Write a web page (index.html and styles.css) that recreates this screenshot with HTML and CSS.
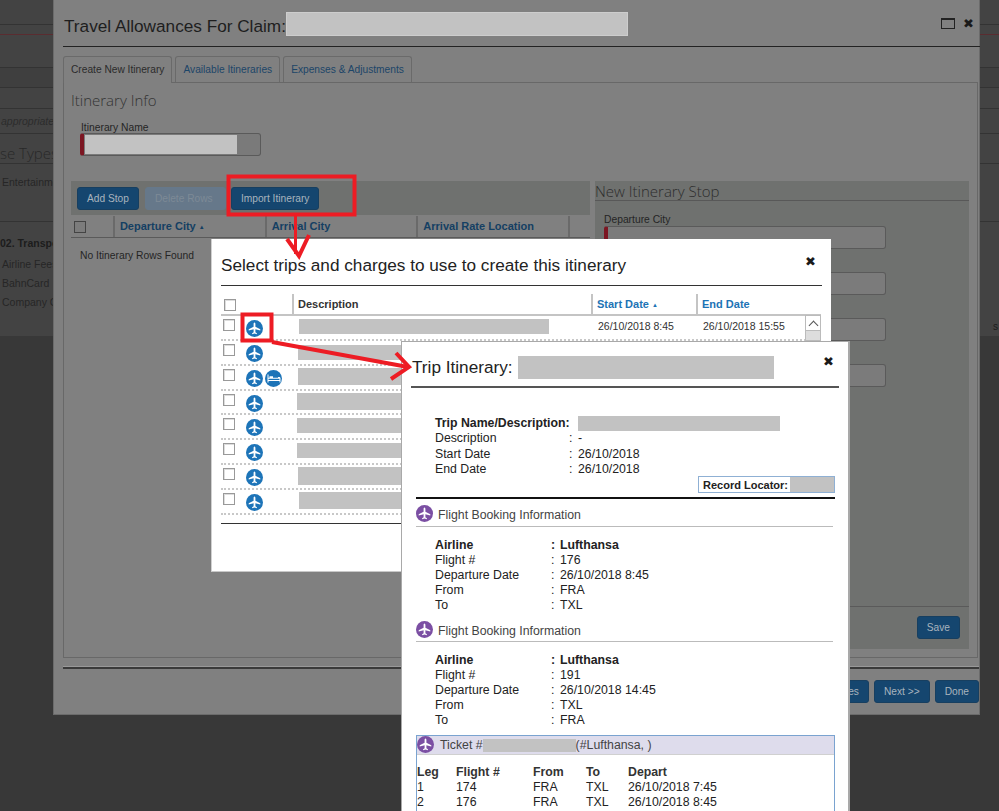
FILE: index.html
```html
<!DOCTYPE html>
<html lang="en">
<head>
<meta charset="utf-8">
<title>Travel Allowances For Claim</title>
<link rel="stylesheet" href="styles.css">
</head>
<body>
<svg class="defs" width="0" height="0" aria-hidden="true">
  <symbol id="plane" viewBox="0 0 17 17">
    <path fill="#fff" d="M8.5 2.6c.6 0 .9.8.9 1.500v2.700l4.900 2.500v1.300L9.400 9.300v2.900l1.500 1.100v.9l-2.400-.6-2.400.6v-.9l1.500-1.100V9.300L2.700 10.600V9.300l4.900-2.500V4.100c0-.7.300-1.500.9-1.500z"/>
  </symbol>
  <symbol id="bed" viewBox="0 0 17 17">
    <path fill="#fff" d="M2.500 4.500h1v3.300h1V6.300h3.500v1.500h5V7h1.200c.7 0 1.300.600 1.300 1.300v4.200h-1v-1.400h-11v1.400h-1zM3.500 8.800v1.300h10.900V8.800z"/>
  </symbol>
</svg>

<div class="page">
  <div class="under">
    <div class="u-row u-h25"></div>
    <div class="u-row u-h9 u-red"></div>
    <div class="u-row u-h33"></div>
    <div class="u-row u-h20 u-alt"></div>
    <div class="u-row u-h22"></div>
    <div class="u-row u-h25"><span class="u-note">appropriate</span></div>
    <div class="u-row u-h30"><span class="u-head">se Types</span></div>
    <div class="u-row u-h58"><span class="u-item u-ent">Entertainment</span></div>
    <div class="u-row u-last">
      <div class="u-list">
        <b class="u-bold">02. Transport</b>
        <span class="u-item">Airline Fees</span>
        <span class="u-item">BahnCard</span>
        <span class="u-item">Company Car</span>
      </div>
      <span class="u-s">s</span>
    </div>
  </div>

  <section class="dialog">
    <header class="d-head">
      <h1 class="d-title">Travel Allowances For Claim:</h1>
      <span class="redact r-claim"></span>
      <span class="d-max"></span>
      <span class="x d-x">&#10006;</span>
    </header>
    <nav class="tabs">
      <span class="tab tab-on">Create New Itinerary</span>
      <span class="tab">Available Itineraries</span>
      <span class="tab">Expenses &amp; Adjustments</span>
    </nav>
    <div class="tabpanel">
      <h2 class="lite">Itinerary Info</h2>
      <label class="lbl lbl-name">Itinerary Name</label>
      <div class="field f-name"><span class="redact r-name"></span></div>
      <div class="cols">
        <div class="left">
          <div class="toolbar">
            <span class="btn">Add Stop</span>
            <span class="btn btn-off">Delete Rows</span>
            <span class="btn btn-import">Import Itinerary</span>
          </div>
          <div class="thead">
            <span class="th th-check"><i class="check check-dim"></i></span>
            <span class="th th-c">Departure City <em class="sort">&#9650;</em></span>
            <span class="th th-c">Arrival City</span>
            <span class="th th-c">Arrival Rate Location</span>
            <span class="th th-end"></span>
          </div>
          <p class="norows">No Itinerary Rows Found</p>
        </div>
        <div class="right">
          <h2 class="lite stop-head">New Itinerary Stop</h2>
          <div class="stop-body">
            <label class="lbl">Departure City</label>
            <div class="field f-stop"></div>
            <div class="field f-stop f-gap"></div>
            <div class="field f-stop f-gap"></div>
            <div class="field f-stop f-gap"></div>
          </div>
          <div class="stop-foot"><span class="btn">Save</span></div>
        </div>
      </div>
    </div>
    <footer class="d-foot">
      <span class="btn">Expenses</span>
      <span class="btn">Next &gt;&gt;</span>
      <span class="btn">Done</span>
    </footer>
  </section>

  <section class="picker">
    <header class="p-head">
      <h2 class="p-title">Select trips and charges to use to create this itinerary</h2>
      <span class="x p-x">&#10006;</span>
    </header>
    <div class="p-thead">
      <span class="pth pth-check"><i class="check"></i></span>
      <span class="pth pth-desc">Description</span>
      <span class="pth pth-date">Start Date <em class="sort">&#9650;</em></span>
      <span class="pth pth-date">End Date</span>
    </div>
    <div class="p-row">
      <i class="check"></i>
      <span class="icons"><svg class="ico ico-blue"><use href="#plane"/></svg></span>
      <span class="redact r-row r1"></span>
      <span class="p-date p-d1">26/10/2018 8:45</span>
      <span class="p-date p-d2">26/10/2018 15:55</span>
      <span class="scroll"><span class="scroll-up"></span><span class="scroll-thumb"></span></span>
    </div>
    <div class="p-row"><i class="check"></i><span class="icons"><svg class="ico ico-blue"><use href="#plane"/></svg></span><span class="redact r-row r2"></span></div>
    <div class="p-row"><i class="check"></i><span class="icons"><svg class="ico ico-blue"><use href="#plane"/></svg><svg class="ico ico-blue ico-bed"><use href="#bed"/></svg></span><span class="redact r-row r3"></span></div>
    <div class="p-row"><i class="check"></i><span class="icons"><svg class="ico ico-blue"><use href="#plane"/></svg></span><span class="redact r-row r4"></span></div>
    <div class="p-row"><i class="check"></i><span class="icons"><svg class="ico ico-blue"><use href="#plane"/></svg></span><span class="redact r-row r5"></span></div>
    <div class="p-row"><i class="check"></i><span class="icons"><svg class="ico ico-blue"><use href="#plane"/></svg></span><span class="redact r-row r6"></span></div>
    <div class="p-row"><i class="check"></i><span class="icons"><svg class="ico ico-blue"><use href="#plane"/></svg></span><span class="redact r-row r7"></span></div>
    <div class="p-row"><i class="check"></i><span class="icons"><svg class="ico ico-blue"><use href="#plane"/></svg></span><span class="redact r-row r8"></span></div>
    <div class="p-end"></div>
  </section>

  <section class="trip">
    <header class="t-head">
      <h2 class="t-title">Trip Itinerary:</h2>
      <span class="redact r-trip"></span>
      <span class="x t-x">&#10006;</span>
    </header>
    <dl class="kv kv-trip">
      <dt class="b">Trip Name/Description:</dt><dd><span class="redact r-tn"></span></dd>
      <dt>Description</dt><dd><i class="colon">:</i>-</dd>
      <dt>Start Date</dt><dd><i class="colon">:</i>26/10/2018</dd>
      <dt>End Date</dt><dd><i class="colon">:</i>26/10/2018</dd>
    </dl>
    <div class="locator-row"><div class="locator"><b>Record Locator:</b><span class="redact r-loc"></span></div></div>
    <div class="thick"></div>

    <div class="sec sec-1"><svg class="ico ico-purple"><use href="#plane"/></svg><span class="sec-text">Flight Booking Information</span></div>
    <dl class="kv kv-flight">
      <dt class="b">Airline</dt><dd class="b"><i class="colon">:</i>Lufthansa</dd>
      <dt>Flight #</dt><dd><i class="colon">:</i>176</dd>
      <dt>Departure Date</dt><dd><i class="colon">:</i>26/10/2018 8:45</dd>
      <dt>From</dt><dd><i class="colon">:</i>FRA</dd>
      <dt>To</dt><dd><i class="colon">:</i>TXL</dd>
    </dl>
    <div class="sec sec-2"><svg class="ico ico-purple"><use href="#plane"/></svg><span class="sec-text">Flight Booking Information</span></div>
    <dl class="kv kv-flight">
      <dt class="b">Airline</dt><dd class="b"><i class="colon">:</i>Lufthansa</dd>
      <dt>Flight #</dt><dd><i class="colon">:</i>191</dd>
      <dt>Departure Date</dt><dd><i class="colon">:</i>26/10/2018 14:45</dd>
      <dt>From</dt><dd><i class="colon">:</i>TXL</dd>
      <dt>To</dt><dd><i class="colon">:</i>FRA</dd>
    </dl>
    <div class="ticket">
      <div class="ticket-head"><svg class="ico ico-purple"><use href="#plane"/></svg><span>Ticket #</span><span class="redact r-tk"></span><span>(#Lufthansa, )</span></div>
      <div class="legs">
        <b>Leg</b><b>Flight #</b><b>From</b><b>To</b><b>Depart</b>
        <span>1</span><span>174</span><span>FRA</span><span>TXL</span><span>26/10/2018 7:45</span>
        <span>2</span><span>176</span><span>FRA</span><span>TXL</span><span>26/10/2018 8:45</span>
      </div>
    </div>
  </section>

  <svg class="marks" viewBox="0 0 999 811" aria-hidden="true">
    <g fill="none" stroke="#ed1c24" stroke-linejoin="miter">
      <rect x="228.500" y="176.500" width="126" height="38" stroke-width="4"/>
      <rect x="242.500" y="314.500" width="29" height="26" stroke-width="4"/>
      <path d="M295.500 216V254" stroke-width="3"/>
      <path d="M287 239l12 17 10-21" stroke-width="4"/>
      <path d="M272 342l136 25" stroke-width="4"/>
      <path d="M396 353l13 14-18 12" stroke-width="4"/>
    </g>
  </svg>
</div>
</body>
</html>
```
FILE: styles.css
```css
* { box-sizing: border-box; }
html, body { margin: 0; padding: 0; }
body { background: #383838; font-family: "Liberation Sans", Arial, sans-serif; overflow: hidden; }
.defs { position: absolute; }
.page { position: relative; width: 999px; height: 811px; overflow: hidden; background: #383838; }

/* dimmed page behind the dialog */
.under { color: #222; font-size: 12px; }
.u-row { background: #434343; border-bottom: 1px solid #333; overflow: hidden; }
.u-h25 { height: 25px; } .u-h9 { height: 10px; } .u-h33 { height: 33px; } .u-h20 { height: 20px; }
.u-h22 { height: 21px; } .u-h30 { height: 30px; } .u-h58 { height: 58px; }
.u-red { border-bottom: 1px solid #5a2c30; }
.u-alt { background: #3f3f3f; }
.u-note { display: block; font: italic 10.500px/25px "Liberation Sans", sans-serif; padding-left: 1px; color: #2c2c2c; }
.u-head { display: block; font: 300 15px/36px "Open Sans", sans-serif; color: #282828; white-space: nowrap; margin-top: 1px; }
.u-item { display: block; font-size: 10.500px; line-height: 19px; padding-left: 2px; color: #262626; white-space: nowrap; }
.u-ent { padding-top: 9px; }
.u-last { height: 114px; border-bottom: 0; display: flex; justify-content: space-between; align-items: flex-end; }
.u-list { padding-top: 14px; height: 114px; }
.u-bold { display: block; font-size: 10.500px; line-height: 14px; margin-bottom: 5px; color: #1c1c1c; white-space: nowrap; }
.u-s { font-size: 10px; padding: 0 1px 4px 0; color: #1c1c1c; }

/* main dialog */
.dialog { position: absolute; left: 53px; top: 0; width: 927px; height: 715px; background: #808080; border: 1px solid #6b6b6b; border-top: 0; padding: 0 0 0 9px; }
.d-head { display: flex; align-items: center; width: 917px; height: 47px; border-bottom: 1px solid #222; padding: 5px 6px 0 1px; }
.d-title { margin: 0; font: 400 17.200px/22px "Liberation Sans", sans-serif; color: #1e1e1e; white-space: nowrap; }
.r-claim { width: 342px; height: 24px; margin-left: 0; margin-top: -3px; border: 1px solid #cdcdcd; }
.d-max { margin-left: auto; width: 14px; height: 11px; border: 1px solid #222; border-top-width: 2px; margin-top: -5px; }
.d-x { margin-left: 8px; margin-top: -5px; }
.x { font: 700 13px/13px "DejaVu Sans", sans-serif; color: #1a1a1a; }
.redact { display: inline-block; background: #c2c2c2; flex: none; }

.tabs { display: flex; gap: 3px; padding: 9px 0 0 0; height: 35px; }
.tab { height: 26px; border: 1px solid #6a6a6a; border-bottom: 0; border-radius: 3px 3px 0 0; padding: 0 7px; font-size: 10.200px; line-height: 25px; color: #1c4568; white-space: nowrap; }
.tab-on { color: #2b2b2b; background: #808080; height: 27px; margin-bottom: -1px; position: relative; z-index: 1; }
.tabpanel { width: 915px; height: 576px; margin-left: 0; border: 1px solid #686868; padding: 0 7px; }
.lite { margin: 0; font: 300 15px/22px "Open Sans", sans-serif; color: #333; white-space: nowrap; }
.tabpanel > .lite { padding-top: 6px; height: 30px; line-height: 22px; }
.lbl { display: block; font-size: 10.300px; line-height: 13px; color: #252525; }
.lbl-name { margin: 8px 0 0 10px; }
.field { background: #7a7a7a; border: 1px solid #5a5a5a; border-left: 4px solid #7c1622; border-radius: 3px; }
.f-name { margin: -1px 0 0 9px; width: 181px; height: 23px; padding: 1px 0 0 1px; }
.r-name { display: block; width: 152px; height: 19px; }
.cols { display: flex; gap: 5px; margin-top: 25px; }
.left { width: 519px; }
.toolbar { display: flex; gap: 6px; align-items: center; height: 34px; background: #6f716f; padding-left: 6px; }
.btn { display: inline-block; height: 23px; padding: 0 9px; background: #15466f; border: 1px solid #173f60; border-radius: 3px; color: #a8b4be; font-size: 10.200px; line-height: 21px; white-space: nowrap; }
.btn-off { background: #66788a; border-color: #66788a; color: #7d8a96; width: 81px; }
.btn-import { margin-left: -1px; }
.thead { display: flex; height: 22px; border-bottom: 1px solid #5a5a5a; margin-top: 1px; }
.th { border-right: 2px solid #6a6a6a; padding-left: 5px; font-size: 11px; font-weight: 700; color: #143f63; line-height: 21px; white-space: nowrap; width: 152px; }
.th-check { width: 44px; padding-left: 3px; }
.th-end { border-right: 0; width: 20px; }
.sort { font-size: 6px; font-style: normal; vertical-align: 1px; }
.check { display: block; width: 12px; height: 12px; background: #fff; border: 1px solid #999; box-shadow: inset 1px 1px 0 #ddd; flex: none; }
.check-dim { background: #7c7c7c; border-color: #444; box-shadow: none; margin-top: 5px; }
.norows { margin: 11px 0 0 9px; font-size: 10.300px; line-height: 13px; color: #252525; }
.right { width: 374px; height: 468px; background: #6f716f; display: flex; flex-direction: column; }
.stop-head { height: 20px; line-height: 20px; border-bottom: 1px solid #585858; color: #2d2d2d; }
.stop-body { padding: 12px 0 0 9px; height: 406px; border-bottom: 1px solid #5a5a5a; }
.f-stop { width: 282px; height: 23px; background: #7b7b7b; }
.f-gap { margin-top: 23px; border-left-color: #5a5a5a; }
.stop-foot { display: flex; justify-content: flex-end; padding: 9px 9px 0 0; }
.d-foot { display: flex; justify-content: flex-end; gap: 5px; width: 916px; margin-top: 9px; border-top: 2px solid #3a3a3a; box-shadow: 0 -1px 0 #999; padding-top: 11px; }

/* trip picker */
.picker { position: absolute; left: 211px; top: 239px; width: 620px; height: 333px; background: #fff; border-left: 1px solid #d0d0d0; border-bottom: 1px solid #c8c8c8; padding: 0 9px; }
.p-head { display: flex; justify-content: space-between; align-items: center; height: 47px; border-bottom: 1px solid #333; padding-right: 6px; }
.p-title { margin: 6px 0 0; font: 400 17.200px/20px "Liberation Sans", sans-serif; color: #222; white-space: nowrap; }
.p-x { margin-top: -1px; }
.p-thead { display: flex; height: 22px; margin-top: 8px; border-bottom: 2px solid #c4c4c4; font-size: 11px; font-weight: 700; line-height: 21px; width: 600px; }
.pth { border-left: 2px solid #c4c4c4; padding-left: 4px; white-space: nowrap; }
.pth-check { border: 0; width: 71px; padding: 5px 0 0 3px; }
.pth-desc { width: 299px; color: #333; }
.pth-date { width: 105px; color: #1d73b5; }
.p-row { position: relative; display: flex; align-items: flex-start; width: 600px; height: 24.850px; border-bottom: 2px dotted #c8c8c8; padding: 3px 0 0 2px; }
.icons { display: flex; gap: 1px; margin: 1px 0 0 11px; width: 40px; }
.ico { display: block; width: 17px; height: 17px; flex: none; border-radius: 50%; }
.ico-blue { background: #1d74b8; }
.ico-purple { background: #7b4fa3; }
.ico-bed { margin-left: 1px; }
.r-row { height: 15px; }
.r1 { width: 250px; margin: 0 0 0 13px; }
.r2 { width: 120px; margin: 1px 0 0 12px; height: 15px; }
.r3 { width: 120px; margin: -1px 0 0 12px; height: 17px; }
.r4 { width: 120px; margin: -1px 0 0 11px; height: 17px; }
.r5 { width: 120px; margin: 0 0 0 11px; }
.r6 { width: 120px; margin: 0 0 0 11px; }
.r7 { width: 120px; margin: -1px 0 0 12px; height: 18px; }
.r8 { width: 120px; margin: -1px 0 0 13px; height: 17px; }
.p-date { position: absolute; top: 4px; font-size: 10.500px; line-height: 13px; color: #333; white-space: nowrap; }
.p-d1 { left: 377px; } .p-d2 { left: 482px; }
.scroll { position: absolute; left: 584px; top: -1px; width: 16px; display: flex; flex-direction: column; }
.scroll-up { height: 16px; border: 1px solid #bbb; position: relative; }
.scroll-up::after { content: ""; position: absolute; left: 4px; top: 6px; width: 6px; height: 6px; border: solid #555; border-width: 1px 0 0 1px; transform: rotate(45deg); }
.scroll-thumb { height: 10px; background: #ddd; border: 1px solid #bbb; border-top: 0; }
.p-end { width: 600px; margin-top: 8px; border-top: 1px solid #333; }

/* trip itinerary */
.trip { position: absolute; left: 401px; top: 341px; width: 449px; height: 480px; background: #fff; border: 1px solid #a9a9a9; border-right-width: 2px; padding: 0 9px; font-size: 12.300px; color: #222; }
.t-head { display: flex; align-items: center; height: 46px; border-bottom: 2px solid #555; width: 428px; padding-right: 5px; }
.t-title { margin: 6px 0 0 1px; font: 400 17.200px/22px "Liberation Sans", sans-serif; color: #222; white-space: nowrap; }
.r-trip { width: 256px; height: 23px; margin: 7px 0 0 5px; }
.t-x { margin-left: auto; margin-top: -5px; }
.kv { display: grid; margin: 0; line-height: 15.300px; }
.kv dt, .kv dd { margin: 0; white-space: nowrap; }
.b { font-weight: 700; }
.colon { font-style: normal; position: absolute; margin-left: -9px; }
.kv-trip { grid-template-columns: 143px 1fr; margin: 28px 0 0 24px; }
.r-tn { display: block; width: 202px; height: 15px; }
.kv-flight { grid-template-columns: 125px 1fr; margin: 11px 0 0 24px; line-height: 15px; }
.locator-row { display: flex; justify-content: flex-end; width: 424px; }
.locator { display: flex; align-items: center; width: 137px; height: 17px; margin-top: -1px; border: 1px solid #8fb0d4; padding-left: 4px; font-size: 11px; }
.r-loc { width: 44px; height: 15px; margin-left: auto; }
.thick { width: 419px; margin: 4px 0 0 5px; border-top: 2px solid #111; }
.sec { display: flex; align-items: center; gap: 5px; width: 417px; margin-left: 5px; height: 27px; padding-top: 1px; border-bottom: 1px solid #bbb; color: #444; }
.sec-text { margin-top: 3px; }
.sec-1 { margin-top: 1px; }
.sec-2 { margin-top: 1px; height: 28px; padding-top: 3px; }
.ticket { width: 419px; height: 90px; margin: 7px 0 0 5px; border: 1px solid #7aa3d0; }
.ticket-head { display: flex; align-items: center; height: 19px; background: #dedcec; border-bottom: 1px solid #d0d0d0; color: #444; }
.ticket-head .ico { margin: -2px 6px 0 0; }
.r-tk { width: 93px; height: 13px; }
.legs { display: grid; grid-template-columns: 39px 77px 53px 42px 1fr; margin-top: 10px; line-height: 15px; }
.legs b { font-weight: 700; color: #333; }
.marks { position: absolute; left: 0; top: 0; width: 999px; height: 811px; pointer-events: none; }
```
